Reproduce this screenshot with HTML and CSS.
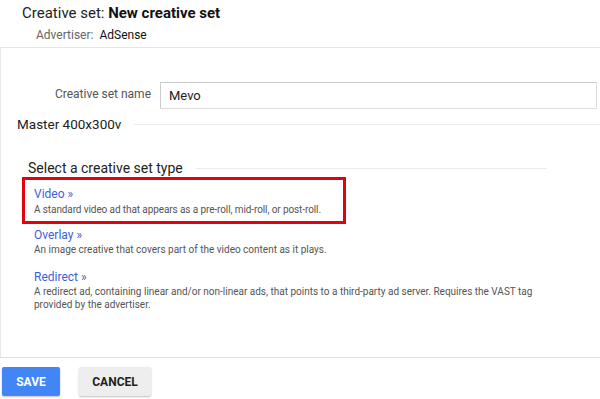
FILE: index.html
```html
<!DOCTYPE html>
<html>
<head>
<meta charset="utf-8">
<link rel="stylesheet" href="styles.css">
</head>
<body>
<div class="page">
  <header class="head">
    <h1 class="title">Creative set: <b>New creative set</b></h1>
    <div class="adv"><span class="adv-label">Advertiser:</span> AdSense</div>
  </header>
  <main class="main">
    <div class="field">
      <label class="field-label">Creative set name</label>
      <div class="input">Mevo</div>
    </div>
    <div class="section master">
      <span class="section-title">Master 400x300v</span>
      <span class="rule"></span>
    </div>
    <div class="types">
      <div class="section type-head">
        <span class="section-title">Select a creative set type</span>
        <span class="rule"></span>
      </div>
      <div class="option highlighted">
        <a class="opt-link">Video »</a>
        <p class="opt-desc">A standard video ad that appears as a pre-roll, mid-roll, or post-roll.</p>
      </div>
      <div class="option">
        <a class="opt-link">Overlay »</a>
        <p class="opt-desc">An image creative that covers part of the video content as it plays.</p>
      </div>
      <div class="option">
        <a class="opt-link">Redirect »</a>
        <p class="opt-desc">A redirect ad, containing linear and/or non-linear ads, that points to a third-party ad server. Requires the VAST tag provided by the advertiser.</p>
      </div>
    </div>
  </main>
  <footer class="foot">
    <button class="btn save">SAVE</button>
    <button class="btn cancel">CANCEL</button>
  </footer>
</div>
</body>
</html>
```
FILE: styles.css
```css
* { box-sizing: border-box; }
html, body { margin: 0; padding: 0; background: #fff; }
body { font-family: Roboto, "Liberation Sans", sans-serif; color: #222; width: 600px; height: 399px; overflow: hidden; }
.page { display: flex; flex-direction: column; height: 399px; }
.head { padding: 3px 0 0 22px; height: 48px; border-bottom: 1px solid #e6e6e6; }
.title { margin: 0; font-size: 15px; font-weight: 400; line-height: 20px; color: #222; }
.title b { font-weight: 700; color: #111; }
.adv { margin: 4px 0 0 14px; font-size: 12px; line-height: 16px; color: #111; }
.adv-label { color: #666; margin-right: 3px; }
.main { border-left: 1px solid #e8e8e8; height: 310px; border-bottom: 1px solid #e0e0e0; }
.field { display: flex; align-items: center; margin-top: 34px; }
.field-label { width: 150px; text-align: right; font-size: 12px; color: #555; padding-bottom: 3px; }
.input { margin-left: 9px; width: 437px; height: 27px; border: 1px solid #ccc; border-bottom-color: #ddd; border-right-color: #ddd; font-size: 13px; line-height: 25px; padding-left: 8px; color: #222; }
.section { display: flex; align-items: center; }
.section-title { white-space: nowrap; }
.rule { flex: 1; height: 1px; background: #ebebeb; }
.master { margin: 6px 0 0 16px; font-size: 13.5px; line-height: 18px; color: #222; }
.master .rule { margin-left: 13px; }
.types { margin-left: 21px; margin-top: 26px; width: 525px; }
.type-head { padding-left: 6px; font-size: 14px; line-height: 18px; color: #222; }
.type-head .rule { margin-left: 13px; }
.option { padding: 0 0 0 12px; margin-top: 14px; }
.option.highlighted { border: 3px solid #e3000f; width: 324px; height: 47px; padding: 7px 0 0 9px; margin-top: 0; }
.option.highlighted .opt-desc { margin-top: 2px; letter-spacing: -0.1px; }
.highlighted + .option { margin-top: 4px; }
.opt-link { display: block; color: #3b5fd6; font-size: 12px; line-height: 14px; }
.opt-desc { margin: 1px 0 0; font-size: 10px; line-height: 13px; color: #555; }
.foot { display: flex; gap: 19px; padding: 9px 0 0 2px; }
.btn { font-family: Roboto, "Liberation Sans", sans-serif; font-weight: 700; font-size: 12px; border: none; border-radius: 2px; height: 29px; padding: 0; cursor: pointer; }
.save { background: #4285f4; color: #fff; width: 58px; box-shadow: 0 1px 2px rgba(0,0,0,.25); }
.cancel { background: #eeeeee; color: #222; width: 72px; box-shadow: 0 1px 2px rgba(0,0,0,.25); }
```
